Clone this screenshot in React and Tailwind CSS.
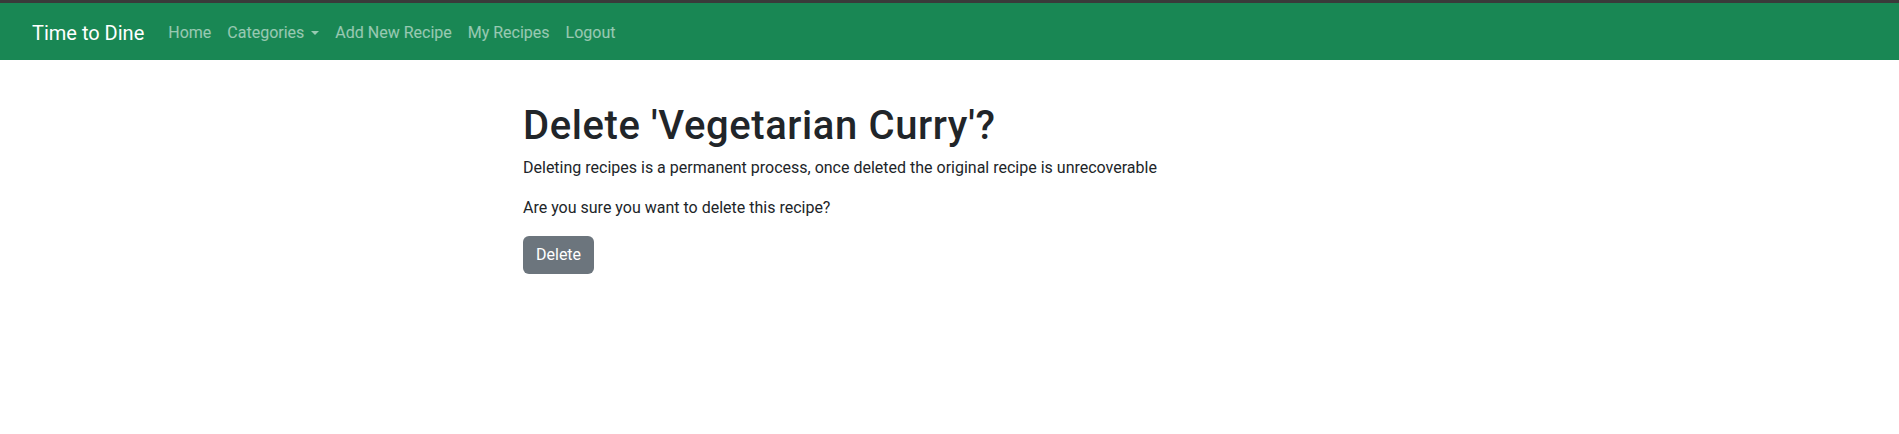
import React from 'react';

const links = ['Home', 'Categories', 'Add New Recipe', 'My Recipes', 'Logout'];

export default function App() {
  return (
    <div className="min-h-[434px] bg-white text-[#212529]" style={{ fontFamily: 'Roboto, "Liberation Sans", sans-serif' }}>
      <div className="h-[3px] bg-[#3a3a3a]" />
      <nav className="flex h-[57px] items-center bg-[#198754] pl-[32px] pt-[3px]">
        <span className="mr-4 text-[20px] leading-[30px] text-white">Time to Dine</span>
        {links.map((l) => (
          <a key={l} className="flex items-center px-2 text-[16px] leading-6 text-white/55">
            {l}
            {l === 'Categories' && (
              <span className="ml-[7px] inline-block border-x-[4.5px] border-t-[4.5px] border-x-transparent border-t-white/55" />
            )}
          </a>
        ))}
      </nav>
      <main className="ml-[523px] w-[856px] pt-[42px]">
        <h1 className="mb-[6px] text-[40px] font-medium leading-[48px] tracking-[0.6px]">Delete 'Vegetarian Curry'?</h1>
        <p className="mb-4 text-[16px] leading-6">
          Deleting recipes is a permanent process, once deleted the original recipe is unrecoverable
        </p>
        <p className="mb-4 text-[16px] leading-6">Are you sure you want to delete this recipe?</p>
        <button className="h-[38px] rounded-[6px] bg-[#6c757d] px-[13px] text-[16px] text-white">Delete</button>
      </main>
    </div>
  );
}
